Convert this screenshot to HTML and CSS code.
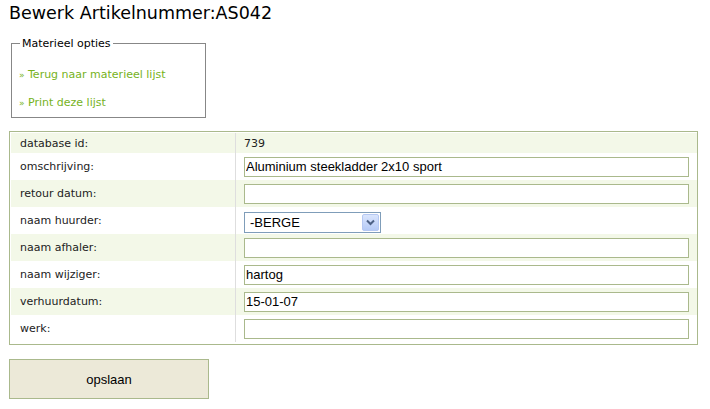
FILE: index.html
```html
<!DOCTYPE html>
<html>
<head>
<meta charset="utf-8">
<title>Bewerk Artikelnummer</title>
<link rel="stylesheet" href="styles.css">
</head>
<body>
<div class="page">
  <h1 class="title">Bewerk Artikelnummer:AS042</h1>
  <fieldset class="options">
    <legend class="options-legend">Materieel opties</legend>
    <div class="options-links">
      <a class="opt-link" href="#"><span class="raquo">»</span> Terug naar materieel lijst</a>
      <a class="opt-link" href="#"><span class="raquo">»</span> Print deze lijst</a>
    </div>
  </fieldset>
  <div class="form-table">
    <div class="row alt first">
      <div class="label">database id:</div>
      <div class="value"><span class="static">739</span></div>
    </div>
    <div class="row">
      <div class="label">omschrijving:</div>
      <div class="value"><input class="field" type="text" value="Aluminium steekladder 2x10 sport"></div>
    </div>
    <div class="row alt">
      <div class="label">retour datum:</div>
      <div class="value"><input class="field" type="text" value=""></div>
    </div>
    <div class="row">
      <div class="label">naam huurder:</div>
      <div class="value">
        <span class="select-wrap">
          <select class="select"><option>-BERGE</option></select>
          <svg class="select-btn" width="17" height="17" viewBox="0 0 17 17">
            <defs>
              <linearGradient id="g" x1="0" y1="0" x2="0" y2="1">
                <stop offset="0" stop-color="#dbe6fd"/>
                <stop offset="1" stop-color="#b4c9f6"/>
              </linearGradient>
            </defs>
            <rect x="0.5" y="0.5" width="16" height="16" rx="1.5" fill="url(#g)" stroke="#b5c8f2"/>
            <path d="M5 6.5 L8.5 10 L12 6.5" fill="none" stroke="#4d6185" stroke-width="2"/>
          </svg>
        </span>
      </div>
    </div>
    <div class="row alt">
      <div class="label">naam afhaler:</div>
      <div class="value"><input class="field" type="text" value=""></div>
    </div>
    <div class="row">
      <div class="label">naam wijziger:</div>
      <div class="value"><input class="field" type="text" value="hartog"></div>
    </div>
    <div class="row alt">
      <div class="label">verhuurdatum:</div>
      <div class="value"><input class="field" type="text" value="15-01-07"></div>
    </div>
    <div class="row">
      <div class="label">werk:</div>
      <div class="value"><input class="field" type="text" value=""></div>
    </div>
  </div>
  <button class="save" type="button">opslaan</button>
</div>
</body>
</html>
```

FILE: styles.css
```css
html, body {
  margin: 0;
  padding: 0;
  background: #ffffff;
}

.page {
  padding: 0 9px;
  font-family: "DejaVu Sans", Verdana, sans-serif;
  font-size: 11px;
  color: #222;
}

.title {
  margin: 0;
  padding-top: 3px;
  font-family: "DejaVu Sans", Verdana, sans-serif;
  font-size: 17.5px;
  font-weight: normal;
  line-height: 21px;
  color: #000;
}

.options {
  width: 179px;
  margin: 13px 0 0 2px;
  padding: 0 7px 7px 7px;
  border: 1px solid #878787;
  box-sizing: content-box;
}

.options-legend {
  margin-left: 1px;
  padding: 0 2px;
  font-size: 11px;
  line-height: 13px;
  color: #000;
}

.options-links {
  display: flex;
  flex-direction: column;
  gap: 14px;
  padding-top: 18px;
}

.opt-link {
  display: block;
  line-height: 14px;
  color: #76b21c;
  text-decoration: none;
}

.raquo {
  font-size: 9px;
}

.form-table {
  width: 689px;
  margin-top: 13px;
  border: 1px solid #aab98c;
  padding: 1px 0 2px 1px;
  box-sizing: border-box;
}

.row {
  display: grid;
  grid-template-columns: 225px 1fr;
  height: 27px;
}

.row.first {
  height: 20px;
}

.row.alt {
  background: #f3f8e8;
}

.label {
  display: flex;
  align-items: center;
  padding-left: 9px;
  border-right: 1px solid #dedede;
  color: #222;
}

.value {
  display: flex;
  align-items: center;
  padding-left: 8px;
}

.static {
  color: #222;
}

.field {
  width: 445px;
  height: 20px;
  box-sizing: border-box;
  margin: 0;
  padding: 0 1px;
  border: 1px solid #aab98c;
  background: #fff;
  font-family: "Liberation Sans", Arial, sans-serif;
  font-size: 13px;
  color: #000;
  outline: none;
}

.select-wrap {
  position: relative;
  display: inline-block;
  width: 137px;
  height: 21px;
  margin-top: 4px;
}

.select {
  appearance: none;
  -webkit-appearance: none;
  width: 137px;
  height: 21px;
  box-sizing: border-box;
  margin: 0;
  padding: 0 0 0 5px;
  border: 1px solid #7f9db9;
  border-radius: 0;
  background: #fff;
  font-family: "Liberation Sans", Arial, sans-serif;
  font-size: 13px;
  color: #000;
}

.select-btn {
  position: absolute;
  top: 2px;
  right: 2px;
}

.save {
  display: block;
  width: 200px;
  height: 40px;
  margin-top: 14px;
  padding: 0;
  border: 1px solid #aab98c;
  border-radius: 0;
  background: #ece9d8;
  font-family: "Liberation Sans", Arial, sans-serif;
  font-size: 13px;
  color: #000;
}
```
